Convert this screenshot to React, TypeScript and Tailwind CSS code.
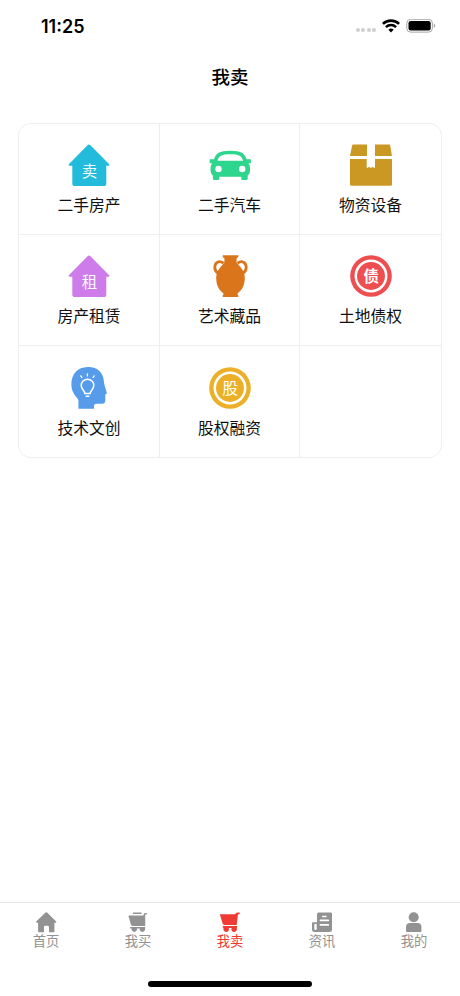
import type { ReactNode } from "react"

interface Category {
  label: string
  icon: ReactNode
}

interface Tab {
  label: string
  icon: ReactNode
  active?: boolean
}

function HouseIcon({ color, char }: { color: string; char: string }) {
  return (
    <svg className="h-[42px] w-[42px]" viewBox="0 0 42 42" aria-hidden="true">
      <path
        fill={color}
        d="M19.8 1.1Q21 .1 22.2 1.1L41.2 20.3Q42 21.7 40.5 21.8H38.3V39.4Q38.3 42 35.7 42H6.9Q4.3 42 4.3 39.4V21.8H1.5Q0 21.7.8 20.3Z"
      />
      <text x="21.4" y="32.6" textAnchor="middle" fill="#f2fbfd" fontSize="15.5">
        {char}
      </text>
    </svg>
  )
}

function CoinIcon({ color, char, bold }: { color: string; char: string; bold?: boolean }) {
  return (
    <svg className="h-[42px] w-[42px]" viewBox="0 0 42 42" aria-hidden="true">
      <circle cx="21" cy="21" r="20.8" fill={color} />
      <circle cx="21" cy="21" r="15.2" fill="none" stroke="#fff" strokeWidth="2.5" />
      <text
        x="21.2"
        y="26.8"
        textAnchor="middle"
        fill="#fff"
        fontSize="15.5"
        fontWeight={bold ? 700 : 400}
      >
        {char}
      </text>
    </svg>
  )
}

function CarIcon() {
  return (
    <svg className="h-[42px] w-[42px]" viewBox="0 0 42 42" aria-hidden="true">
      <path
        fill="#2ed58c"
        fillRule="evenodd"
        d="M.7 15.2H5C7 9.5 10 6.7 21.3 6.7S35.6 9.5 37.6 15.2H41.9V19.3H39.4C41 21.5 41.5 25 40.8 28.3Q40.3 30.5 38.7 31.5V34.7Q38.7 36 37.4 36H33.6Q32.3 36 32.3 34.7V32.8H10.3V34.7Q10.3 36 9 36H5.2Q3.9 36 3.9 34.7V31.5Q2.3 30.5 1.8 28.3C1.1 25 1.6 21.5 3.2 19.3H.7ZM8.5 16.7H34.1C32.8 12.1 30 10.3 21.3 10.3S9.8 12.1 8.5 16.7Z"
      />
      <circle cx="9.5" cy="25" r="3.2" fill="#fff" />
      <circle cx="33.2" cy="25" r="3.2" fill="#fff" />
    </svg>
  )
}

function BoxIcon() {
  return (
    <svg className="h-[42px] w-[42px]" viewBox="0 0 42 42" fill="#cc9824" aria-hidden="true">
      <path d="M3 .5H17V12H0L2.100 1.400Q2.300.5 3 .5Z" />
      <path d="M25 .5H39.300Q40 .5 40.200 1.400L42 12H25Z" />
      <path d="M0 15H16.700V23.800H18.300V22.900H19.800V23.800H21.800V22.900H23.300V23.800H25V15H42V40.500Q42 41.700 40.800 41.700H1.200Q0 41.700 0 40.500Z" />
    </svg>
  )
}

function VaseIcon() {
  return (
    <svg className="h-[42px] w-[42px]" viewBox="0 0 42 42" aria-hidden="true">
      <path
        d="M14.5 8.2C10 4.900 5.800 7.600 5.800 12.300C5.800 14.800 7 17 9.300 18.300M28.500 8.200C33 4.900 37.200 7.600 37.200 12.300C37.200 14.800 36 17 33.700 18.300"
        fill="none"
        stroke="#db751c"
        strokeWidth="2.8"
      />
      <path
        fill="#db751c"
        d="M14 .3H29Q29.600.3 29.400 1.200C29.200 2.300 28.700 2.700 27.600 2.900V7.200C28 9 35.800 14 35.800 22.500C35.800 30 33.200 35 28.500 38.500V39.500L29.300 40V42H13.700V40L14.500 39.500V38.500C9.800 35 7.200 30 7.200 22.500C7.200 14 15 9 15.400 7.200V2.900C14.300 2.700 13.800 2.300 13.600 1.200Q13.400.3 14 .3Z"
      />
    </svg>
  )
}

function IdeaIcon() {
  return (
    <svg className="h-[42px] w-[42px]" viewBox="0 0 42 42" aria-hidden="true">
      <path
        fill="#569ceb"
        d="M19.500.1C29.500-.2 35.600 6 35.900 14.500C36 18.300 38.300 23 38.900 26.200Q39 27.200 37.300 27.200V33.500Q37.300 36.800 34 36.800H29Q26 36.800 26 39.200V41.800H10.400V33.500C10.400 31 3.800 27.500 3.400 18.500C2.900 7.500 9.500.4 19.500.1Z"
      />
      <g fill="none" stroke="#fff" strokeLinecap="round">
        <path
          strokeWidth="1.5"
          d="M16.800 26.500C16.800 23.500 13.200 22.200 13.200 18.500A6.300 6.300 0 0 1 25.800 18.500C25.800 22.200 22.200 23.500 22.200 26.500Z"
        />
        <path strokeWidth="1.6" d="M18.200 29.300H20.800" />
        <path strokeWidth="1.3" d="M19.400 6.800V8.900M12.800 8.900L13.900 10.500M26.200 8.900L25.100 10.500" />
      </g>
    </svg>
  )
}

function HomeTabIcon() {
  return (
    <path d="M10.500 1.600Q11.300.9 12.100 1.600L21.200 10.600Q21.700 11.500 20.800 11.700H19.400V20.300Q19.400 21.200 18.500 21.200H14V16Q14 14.800 12.800 14.800H10.200Q9 14.800 9 16V21.200H4Q3.100 21.200 3.100 20.300V11.700H1.600Q.7 11.500 1.200 10.600Z" />
  )
}

function BuyTabIcon() {
  return (
    <>
      <path d="M6.300 1.400H14Q14.800 1.400 14.800 2.200T14 3H6.300Q5.600 3 5.600 2.200T6.300 1.400Z" />
      <path d="M1.700 4.600H16.300L16.900 2.900Q17.200 2 18.100 2H19.800V3.500H18.200V14.900H5.500Q4.300 14.900 4 13.800L1.600 5.500Q1.500 4.600 1.700 4.600Z" />
      <path d="M3.200 15.900H18.200V17.500H18A2.700 2.700 0 1 1 12.800 17.500H9.900A2.700 2.700 0 1 1 4.700 17.500H3.200Z" />
    </>
  )
}

function SellTabIcon() {
  return (
    <>
      <path d="M1.200 3.200H15.800L16.900 2.400Q17.500 1.500 18.400 1.500H20.700V3.200H19L17.700 13.900H5.200Q4 13.900 3.700 12.800L1 4Q.9 3.200 1.200 3.200Z" />
      <path d="M4 15.100H18V16.800H17.600A2.800 2.800 0 1 1 12.600 17H9.700A2.800 2.800 0 1 1 4.700 16.800H4Q3 16 4 15.100Z" />
    </>
  )
}

function NewsTabIcon() {
  return (
    <>
      <path
        fillRule="evenodd"
        d="M7.500 1.400H19.600Q21 1.400 21 2.800V18.500Q21 21 18.500 21H3.500Q1 21 1 18.500V12Q1 11.200 1.800 11.200H6V2.900Q6 1.400 7.500 1.400ZM3.300 13V18Q3.300 18.900 4.500 18.900T5.700 18V13Z"
      />
      <path stroke="#fff" strokeWidth="1.6" strokeLinecap="round" d="M11.700 5.500H15M9.400 9.400H17.400M9.400 13.900H17.400" />
    </>
  )
}

function UserTabIcon() {
  return (
    <>
      <circle cx="10.700" cy="6.200" r="5" />
      <path d="M7.200 12.100H14.200Q18.400 12.100 18.400 16.300V20.200Q18.400 21 17.600 21H3.800Q3 21 3 20.200V16.300Q3 12.100 7.200 12.100Z" />
    </>
  )
}

const categories: Category[] = [
  { label: "二手房产", icon: <HouseIcon color="#23bbdc" char="卖" /> },
  { label: "二手汽车", icon: <CarIcon /> },
  { label: "物资设备", icon: <BoxIcon /> },
  { label: "房产租赁", icon: <HouseIcon color="#cf7ceb" char="租" /> },
  { label: "艺术藏品", icon: <VaseIcon /> },
  { label: "土地债权", icon: <CoinIcon color="#ee4e50" char="债" bold /> },
  { label: "技术文创", icon: <IdeaIcon /> },
  { label: "股权融资", icon: <CoinIcon color="#ebb027" char="股" /> },
]

const tabs: Tab[] = [
  { label: "首页", icon: <HomeTabIcon /> },
  { label: "我买", icon: <BuyTabIcon /> },
  { label: "我卖", icon: <SellTabIcon />, active: true },
  { label: "资讯", icon: <NewsTabIcon /> },
  { label: "我的", icon: <UserTabIcon /> },
]

function StatusBar() {
  return (
    <div className="flex h-[51px] items-center justify-between pr-6 pl-[41px] text-black">
      <span className="pt-px font-['Inter',sans-serif] text-[18px] font-semibold">11:25</span>
      <div className="flex items-center gap-1.5">
        <div className="flex gap-[1.5px] pt-2">
          {[0, 1, 2, 3].map((i) => (
            <span key={i} className="h-1 w-1 rounded-full bg-[#cfcfcf]" />
          ))}
        </div>
        <svg className="h-[14px] w-[18px]" viewBox="0 0 18 14" fill="none" stroke="currentColor" aria-hidden="true">
          <path strokeWidth="2.6" d="M.9 4.900A11.600 11.600 0 0 1 17.100 4.900" />
          <path strokeWidth="2.5" d="M3.900 8.200A7.300 7.300 0 0 1 14.100 8.200" />
          <path fill="currentColor" stroke="none" d="M6.400 10.700A3.700 3.700 0 0 1 11.600 10.700L9 13.400Z" />
        </svg>
        <svg className="h-[14px] w-[30px]" viewBox="0 0 30 14" aria-hidden="true">
          <rect x=".8" y=".3" width="25.6" height="12.8" rx="3.8" fill="none" stroke="#a5a5a5" />
          <rect x="2.5" y="2" width="22.2" height="9.4" rx="2.2" />
          <path d="M27.800 4.600Q29.200 5.200 29.200 6.700T27.800 8.800Z" fill="#a5a5a5" />
        </svg>
      </div>
    </div>
  )
}

export default function App() {
  return (
    <div className="flex h-[996px] w-[460px] flex-col bg-white font-['Noto_Sans_CJK_SC',sans-serif]">
      <StatusBar />
      <header className="flex h-[51px] items-center justify-center text-[18.5px] font-medium text-black">
        我卖
      </header>

      <main className="flex-1 px-[18px] pt-[21px]">
        <div className="grid grid-cols-[140px_139px_1fr] grid-rows-[110px_110px_111px] gap-px overflow-hidden rounded-[13px] border border-[#eeeeee] bg-[#eeeeee]">
          {categories.map((c) => (
            <button key={c.label} className="flex flex-col items-center justify-center bg-white pt-[3px]">
              {c.icon}
              <span className="mt-[7px] text-[15.8px] leading-6 text-[#111111]">{c.label}</span>
            </button>
          ))}
          <div className="bg-white" />
        </div>
      </main>

      <nav className="flex h-[94px] flex-col justify-between border-t border-[#e6e6e6] pt-2 pb-[9px]">
        <div className="flex">
          {tabs.map((t) => (
            <button
              key={t.label}
              className={`flex flex-1 flex-col items-center ${t.active ? "text-[#ee3b34]" : "text-[#929292]"}`}
            >
              <svg className="h-[22px] w-[22px]" viewBox="0 0 22 22" fill="currentColor" aria-hidden="true">
                {t.icon}
              </svg>
              <span className="text-[13.3px] leading-4">{t.label}</span>
            </button>
          ))}
        </div>
        <div className="h-1.5 w-[164px] self-center rounded-full bg-black" />
      </nav>
    </div>
  )
}
